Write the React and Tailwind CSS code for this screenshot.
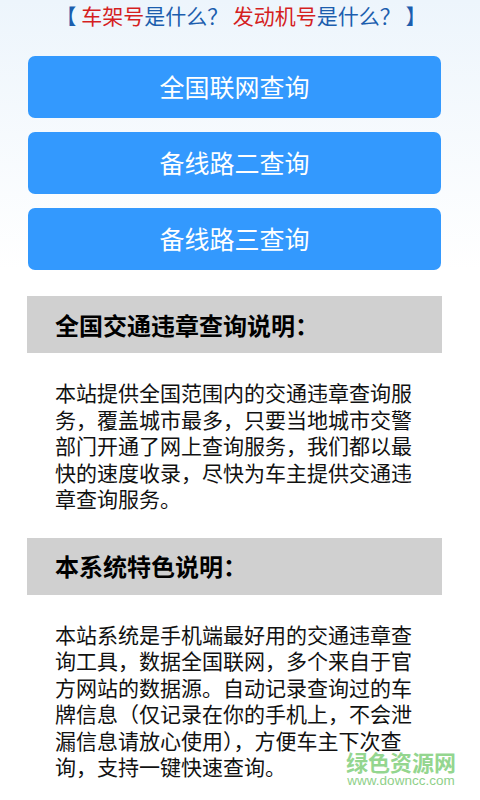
import React from 'react';

const cjk = { fontFamily: '"Noto Sans CJK SC", "Noto Sans", sans-serif' };

const buttons = ['全国联网查询', '备线路二查询', '备线路三查询'];

const sections = [
  {
    title: '全国交通违章查询说明：',
    body: '本站提供全国范围内的交通违章查询服务，覆盖城市最多，只要当地城市交警部门开通了网上查询服务，我们都以最快的速度收录，尽快为车主提供交通违章查询服务。',
  },
  {
    title: '本系统特色说明：',
    body: '本站系统是手机端最好用的交通违章查询工具，数据全国联网，多个来自于官方网站的数据源。自动记录查询过的车牌信息（仅记录在你的手机上，不会泄漏信息请放心使用），方便车主下次查询，支持一键快速查询。',
  },
];

export default function App() {
  return (
    <div className="relative w-[480px] h-[800px] overflow-hidden bg-white" style={cjk}>
      <div className="bg-gradient-to-b from-[#edf5fc] to-white">
        {/* question links */}
        <p className="h-[30px] leading-[30px] text-center text-[21px] text-[#1c5eae] pl-[2px] whitespace-pre">
          {'【 '}<span className="text-[#d51f1f]">车架号</span>{'是什么？ '}<span className="text-[#d51f1f]">发动机号</span>{'是什么？ 】'}
        </p>

        <div className="ml-[28px] w-[413px] mt-[26px] flex flex-col gap-[14px]">
          {buttons.map(b => (
            <button key={b} className="h-[62px] rounded-[7px] bg-[#3399fe] text-white text-[25px] flex items-center justify-center">
              {b}
            </button>
          ))}
        </div>
      </div>

      {sections.map(s => (
        <div key={s.title} className="mt-[26px]">
          <div className="ml-[27px] w-[415px] h-[57px] bg-[#d0d0d0] flex items-center pl-[28px]">
            <h2 className="text-[24px] font-bold text-black">{s.title}</h2>
          </div>
          <p className="mt-[26px] ml-[55px] w-[366px] text-[21px] leading-[26.5px] text-[#111]">{s.body}</p>
        </div>
      ))}

      {/* watermark */}
      <div className="absolute left-[346px] top-[748px] flex flex-col items-center">
        <span className="text-[22px] leading-[26px] font-bold text-[#94d68f]">绿色资源网</span>
        <span className="text-[13.5px] leading-[14px] text-[#8fd08a]" style={{ fontFamily: '"Liberation Sans", Arial, sans-serif' }}>www.downcc.com</span>
      </div>
    </div>
  );
}
